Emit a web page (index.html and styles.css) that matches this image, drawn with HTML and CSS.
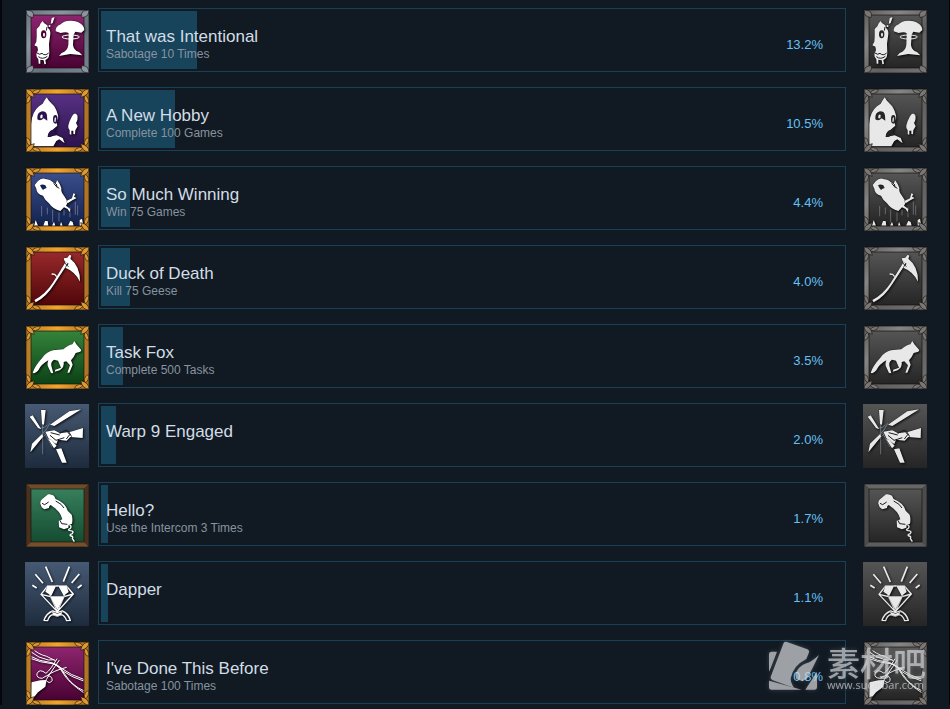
FILE: index.html
```html
<!DOCTYPE html>
<html lang="en">
<head>
<meta charset="utf-8">
<title>Global Achievements</title>
<link rel="stylesheet" href="styles.css">
</head>
<body>
<svg class="sprite" aria-hidden="true">
  <defs>
    <linearGradient id="goldFill" x1="0" y1="0" x2="1" y2="0"><stop offset="0" stop-color="#b57a26"/><stop offset=".5" stop-color="#f3a52c"/><stop offset="1" stop-color="#ab7024"/></linearGradient>
    <linearGradient id="silverFill" x1="0" y1="0" x2="1" y2="1"><stop offset="0" stop-color="#69737f"/><stop offset=".3" stop-color="#8b95a2"/><stop offset=".6" stop-color="#65707c"/><stop offset="1" stop-color="#79838f"/></linearGradient>
    <linearGradient id="grayFill" x1="0" y1="0" x2="1" y2="1"><stop offset="0" stop-color="#5b5b5b"/><stop offset=".3" stop-color="#858585"/><stop offset=".6" stop-color="#606060"/><stop offset="1" stop-color="#727272"/></linearGradient>

    <g id="leaf">
      <path d="M36 30Q42 18 62 19Q58 31 46 32Z M30 36Q18 42 19 62Q31 58 32 46Z"/>
      <path d="M18 18Q38 18 43 43Q18 38 18 18Z"/>
    </g>
    <symbol id="frame-leaf" viewBox="15 15 192 192">
      <path class="frame" fill-rule="evenodd" d="M18 18H207V207H18Z M42 33Q33 33 33 42V183Q33 192 42 192H183Q192 192 192 183V42Q192 33 183 33Z"/>
      <g class="orn">
        <use href="#leaf"/>
        <use href="#leaf" transform="translate(225 0) scale(-1 1)"/>
        <use href="#leaf" transform="translate(0 225) scale(1 -1)"/>
        <use href="#leaf" transform="translate(225 225) scale(-1 -1)"/>
      </g>
    </symbol>
    <g id="tip"><path d="M18 18L35 21L41 30L39 41L29 38L21 33Z"/></g>
    <symbol id="frame-tip" viewBox="15 15 192 192">
      <path class="frame" fill-rule="evenodd" d="M18 18H207V207H18Z M33 33V192H192V33Z"/>
      <g class="orn">
        <use href="#tip"/>
        <use href="#tip" transform="translate(225 0) scale(-1 1)"/>
        <use href="#tip" transform="translate(0 225) scale(1 -1)"/>
        <use href="#tip" transform="translate(225 225) scale(-1 -1)"/>
      </g>
    </symbol>
    <symbol id="frame-bevel" viewBox="15 15 192 192">
      <path class="bevel-a" d="M18 18H207L192 33H33Z"/>
      <path class="bevel-b" d="M18 18L33 33V192L18 207Z M207 18V207L192 192V33Z"/>
      <path class="bevel-c" d="M18 207H207L192 192H33Z"/>
      <path class="edge" d="M18 18H207V207H18Z M33 33V192H192V33Z"/>
    </symbol>

    <symbol id="sabotage" viewBox="15 15 192 192">
      <g class="ink">
        <path d="M50 75L58 67L62 58L68 51L72 57L82 64L84 72Q92 78 91 90L87 120L88 148L86 160Q80 168 76 168L78 180L73 181L71 169L61 167L61 179L56 179L55 166Q48 158 49 150L54 138L52 128L43 124L49 113L50 98Z"/>
        <path d="M95 42L104 39L98 57L92 60Z M86 64L91 63L91 69L86 69Z"/>
        <path d="M107 82Q105 68 122 61Q130 51 150 50Q170 49 180 58Q192 64 193 78L184 86L166 83L161 92L159 122Q160 138 177 144L187 154L151 150L117 156L125 147Q143 140 145 122L146 88Q140 82 122 87Z"/>
      </g>
      <ellipse class="line" cx="152" cy="99" rx="26" ry="6" stroke-width="3"/>
      <ellipse class="hole" cx="71" cy="91" rx="8" ry="12"/><ellipse class="ink-flat" cx="72" cy="92" rx="3" ry="6"/>
      <path class="dark-line" d="M51 147Q59 154 66 148Q75 157 86 147 M55 158Q68 168 82 157 M81 69L79 80"/>
    </symbol>

    <symbol id="hobby" viewBox="15 15 192 192">
      <g class="ink">
        <path d="M33 188V124Q36 86 57 70L68 62L73 53L80 43L87 53L97 64Q108 74 113 94Q118 108 109 116L112 128L97 141Q85 144 83 162Q92 163 98 159L110 157L128 165L134 181L118 169L109 174L100 190H42Q34 190 33 188Z"/>
        <path d="M156 100Q164 85 172 97Q175 110 168 120L173 130L166 142L165 154L160 153L160 143L154 143L154 155L149 154L149 142Q143 137 145 127Q149 112 156 100Z"/>
      </g>
      <path class="hole" d="M52 109Q50 88 66 85Q80 85 81 98L82 113L71 106Q62 116 52 109Z"/>
      <ellipse class="hole" cx="106" cy="109" rx="7" ry="13"/>
      <path class="ink-flat" d="M61 98Q65 92 68 96L67 106L61 106Z M104 105L108 103L107 116L103 116Z"/>
      <path class="hole" d="M111 132L98 141Q85 145 83 160Q91 163 99 157L110 154Q99 148 111 132Z"/>
    </symbol>

    <symbol id="winning" viewBox="15 15 192 192">
      <path class="streak" d="M65 132V163 M82 137V157 M98 143V181 M117 151V178 M132 143V160 M150 136V166 M166 119V158 M173 130V160"/>
      <g class="ink">
        <path d="M44 69L54 57Q65 45 79 52Q89 51 99 61L107 67L111 54L119 66L124 78Q122 90 132 101Q141 112 142 124L138 131L151 141L149 151L143 141L132 136L121 147Q99 142 87 124L76 113L69 101Q50 97 49 80Z"/>
        <path d="M139 117L156 109L160 94L166 96L162 104L170 108L157 115L143 124Z"/>
        <path d="M42 191L47 174L54 191Z M70 191L75 177L83 177L85 191Z M96 191L102 179L106 191Z M120 191L123 179L128 191Z M144 191L151 176L158 180L161 191Z M179 191V174L186 170L190 191Z"/>
      </g>
      <path class="hole" d="M60 70Q67 65 76 70L80 78Q73 80 69 84Q64 79 60 70Z"/>
      <path class="dark-line" d="M101 64Q109 76 118 79 M109 66L111 76"/>
    </symbol>

    <symbol id="scythe" viewBox="15 15 192 192">
      <g class="ink">
        <path d="M43 177Q75 161 98 126L131 73L141 54L147 58L136 79L103 129Q78 169 47 184Z"/>
        <path d="M131 52L142 50L149 41L154 44L151 53Q181 76 180 122Q166 92 136 80L146 68L134 61Z"/>
      </g>
      <path class="line" stroke-width="4" d="M95 99L104 100L110 107"/>
      <path class="dark-line" d="M133 65L145 77"/>
    </symbol>

    <symbol id="fox" viewBox="15 15 192 192">
      <path class="ink" d="M38 158Q45 137 67 113Q81 95 99 91L130 88Q146 74 157 73L163 63L169 73L184 90L181 95L167 99Q162 112 153 121L158 134L148 158L142 158L150 136L139 124L131 126Q134 141 119 151L104 155L106 149L123 143L114 122L102 119Q92 125 94 137L100 160L93 159L85 142Q80 133 85 121Q63 133 55 151Q45 163 38 158Z"/>
    </symbol>

    <symbol id="warp" viewBox="15 15 192 192">
      <path class="crack" d="M68 66V166 M82 78Q74 88 58 88 M78 92L60 114 M74 102L96 144 M90 72L77 94 M57 126L76 107"/>
      <g class="ink">
        <path d="M29 53L38 49L64 91L54 87Z M63 33L77 33L72 77L66 76Z M184 31L148 37L90 77L103 81Z M31 160L36 134L67 104L69 113Z"/>
        <path d="M76 98L103 94L120 103L152 98L189 87L188 117L151 114L140 125L114 122L109 135L95 127L86 119Z"/>
        <path d="M84 119L94 123L110 140L102 148Z M108 151L124 148L140 191L126 191Z"/>
      </g>
      <path class="dark-line" d="M119 103L139 93L149 107L139 120 M90 109L108 124L133 116 M92 101L119 108 M146 98L155 113"/>
    </symbol>

    <symbol id="phone" viewBox="15 15 192 192">
      <path class="line" stroke-width="4" d="M143 137Q158 143 151 151Q140 156 151 158Q163 159 157 167Q146 171 153 174Q161 175 157 181L163 191"/>
      <path class="ink" d="M61 77Q60 67 67 63L84 49Q94 47 102 53L107 63Q137 75 143 98L155 110Q159 122 156 137L146 140L145 149L132 154L117 148L116 128L127 124Q122 100 92 81L88 84L87 90L73 94L65 88Z"/>
      <path class="dark-line" d="M107 69Q126 78 132 90 M66 76L74 80L86 72 M120 127L125 137L142 139"/>
    </symbol>

    <symbol id="diamond" viewBox="15 15 192 192">
      <path class="line" stroke-width="4" d="M83 87H139L160 111L112 164L63 112Z M63 112L92 119L112 163L132 119L160 111 M83 87L92 119H132L139 87 M72 190Q79 169 98 162L112 167L127 162Q144 168 151 190L140 191Q134 175 124 173L112 177L97 173Q87 177 83 191Z"/>
      <path class="ink" d="M82 87H108L94 116L76 104Z M115 87H140L146 105L131 116Z M91 119H133L112 158Z M96 164L112 170L128 164L123 173L112 177L99 173Z"/>
      <path class="line" stroke-width="5" d="M77 29L97 75 M148 29L130 74 M46 52L69 79 M178 51L155 78 M37 85L50 93 M185 84L173 93"/>
    </symbol>

    <symbol id="wires" viewBox="15 15 192 192">
      <path class="line" stroke-width="3" d="M34 35Q54 55 80 61L106 74 M34 48Q54 66 85 72L103 71 M34 62Q56 75 90 79Q111 83 128 99Q151 117 191 130 M34 68Q59 79 96 83Q117 88 130 106Q158 125 191 135 M111 68Q92 101 78 112Q58 96 51 113Q48 126 67 127L78 120 M82 119Q99 121 96 134Q88 146 78 132L90 113L118 72 M78 121Q100 104 140 94 M94 80Q115 86 127 108Q144 139 191 170 M104 85Q124 96 134 114Q156 149 191 164"/>
      <path class="ink" d="M34 139L61 133L80 132L76 152L54 169L37 190Q33 190 33 184Z"/>
    </symbol>
  </defs>
</svg>

<main class="achievements">
  <article class="row">
    <svg class="badge silver magenta framed" role="img" aria-label="Unlocked"><use href="#frame-tip"/><use class="glyph" href="#sabotage"/></svg>
    <div class="bar"><div class="fill" style="width:13%"></div><div class="info"><div><h3>That was Intentional</h3><p>Sabotage 10 Times</p></div><span class="percent">13.2%</span></div></div>
    <svg class="badge locked framed" role="img" aria-label="Locked"><use href="#frame-tip"/><use class="glyph" href="#sabotage"/></svg>
  </article>
  <article class="row">
    <svg class="badge gold purple framed" role="img" aria-label="Unlocked"><use class="glyph" href="#hobby"/><use href="#frame-leaf"/></svg>
    <div class="bar"><div class="fill" style="width:10%"></div><div class="info"><div><h3>A New Hobby</h3><p>Complete 100 Games</p></div><span class="percent">10.5%</span></div></div>
    <svg class="badge locked framed" role="img" aria-label="Locked"><use class="glyph" href="#hobby"/><use href="#frame-leaf"/></svg>
  </article>
  <article class="row">
    <svg class="badge gold blue framed" role="img" aria-label="Unlocked"><use class="glyph" href="#winning"/><use href="#frame-leaf"/></svg>
    <div class="bar"><div class="fill" style="width:4%"></div><div class="info"><div><h3>So Much Winning</h3><p>Win 75 Games</p></div><span class="percent">4.4%</span></div></div>
    <svg class="badge locked framed" role="img" aria-label="Locked"><use class="glyph" href="#winning"/><use href="#frame-leaf"/></svg>
  </article>
  <article class="row">
    <svg class="badge gold red framed" role="img" aria-label="Unlocked"><use class="glyph" href="#scythe"/><use href="#frame-leaf"/></svg>
    <div class="bar"><div class="fill" style="width:4%"></div><div class="info"><div><h3>Duck of Death</h3><p>Kill 75 Geese</p></div><span class="percent">4.0%</span></div></div>
    <svg class="badge locked framed" role="img" aria-label="Locked"><use class="glyph" href="#scythe"/><use href="#frame-leaf"/></svg>
  </article>
  <article class="row">
    <svg class="badge gold green framed" role="img" aria-label="Unlocked"><use class="glyph" href="#fox"/><use href="#frame-leaf"/></svg>
    <div class="bar"><div class="fill" style="width:3%"></div><div class="info"><div><h3>Task Fox</h3><p>Complete 500 Tasks</p></div><span class="percent">3.5%</span></div></div>
    <svg class="badge locked framed" role="img" aria-label="Locked"><use class="glyph" href="#fox"/><use href="#frame-leaf"/></svg>
  </article>
  <article class="row">
    <svg class="badge slate" role="img" aria-label="Unlocked"><use class="glyph" href="#warp"/></svg>
    <div class="bar"><div class="fill" style="width:2%"></div><div class="info"><div><h3>Warp 9 Engaged</h3></div><span class="percent">2.0%</span></div></div>
    <svg class="badge locked" role="img" aria-label="Locked"><use class="glyph" href="#warp"/></svg>
  </article>
  <article class="row">
    <svg class="badge bronze jade framed" role="img" aria-label="Unlocked"><use href="#frame-bevel"/><use class="glyph" href="#phone"/></svg>
    <div class="bar"><div class="fill" style="width:1%"></div><div class="info"><div><h3>Hello?</h3><p>Use the Intercom 3 Times</p></div><span class="percent">1.7%</span></div></div>
    <svg class="badge locked framed" role="img" aria-label="Locked"><use href="#frame-bevel"/><use class="glyph" href="#phone"/></svg>
  </article>
  <article class="row">
    <svg class="badge slate" role="img" aria-label="Unlocked"><use class="glyph" href="#diamond"/></svg>
    <div class="bar"><div class="fill" style="width:1%"></div><div class="info"><div><h3>Dapper</h3></div><span class="percent">1.1%</span></div></div>
    <svg class="badge locked" role="img" aria-label="Locked"><use class="glyph" href="#diamond"/></svg>
  </article>
  <article class="row">
    <svg class="badge gold magenta framed" role="img" aria-label="Unlocked"><use class="glyph" href="#wires"/><use href="#frame-leaf"/></svg>
    <div class="bar"><div class="fill" style="width:0%"></div><div class="info"><div><h3>I've Done This Before</h3><p>Sabotage 100 Times</p></div><span class="percent">0.8%</span></div></div>
    <svg class="badge locked framed" role="img" aria-label="Locked"><use class="glyph" href="#wires"/><use href="#frame-leaf"/></svg>
    <div class="watermark">
      <svg class="mark" viewBox="0 0 150 150" aria-hidden="true">
        <path d="M0 40Q0 32 8 32H24L4 84L0 92Z M0 119L98 146H8Q0 146 0 138Z M144 92V138Q144 146 136 146H109Z"/>
        <path d="M44 6Q47 0 54 3L115 25Q123 29 119 37L112 54Q72 74 65 112Q65 128 76 141L12 118Q2 113 6 105Z"/>
        <path d="M150 42Q126 64 112 67Q87 76 79 101L82 115L101 120L114 113L131 80Z"/>
      </svg>
      <div><div class="brand" lang="zh">素材吧</div><div class="url">www.sucaibar.com</div></div>
    </div>
  </article>
</main>
</body>
</html>
```

FILE: styles.css
```css
* { box-sizing: border-box; }

body {
  margin: 0;
  background: #111a22;
  border-left: 2px solid #03070d;
  border-right: 1px solid #03070d;
  font-family: "Liberation Sans", Arial, sans-serif;
}

.sprite { position: absolute; width: 0; height: 0; }

.achievements {
  display: flex;
  flex-direction: column;
  gap: 14px;
  padding: 8px 22px 0 23px;
}

.row {
  position: relative;
  display: flex;
  align-items: flex-end;
}

.bar {
  flex: 1;
  display: grid;
  height: 64px;
  margin: 0 17px 1px 9px;
  padding: 2px 8px 2px 2px;
  border: 1px solid #184158;
}

.fill, .info { grid-area: 1 / 1; }
.fill { background: #17435b; }

.info {
  display: flex;
  justify-content: space-between;
  align-items: flex-start;
  padding: 16px 14px 0 5px;
}

h3, p { margin: 0; font-weight: 400; }
h3 { font-size: 17px; line-height: 20px; color: #d2dde6; }
p { font-size: 12px; line-height: 14px; color: #8793a0; }

.percent {
  margin-top: 8px;
  font-size: 13px;
  line-height: 20px;
  color: #67c1f5;
}

/* Badges */
.badge {
  --ink: #fff;
  --frame: url(#grayFill);
  --orn: #777;
  --bevel-a: #666;
  --bevel-b: #4c4c4c;
  --bevel-c: #5c5c5c;
  flex: none;
  display: block;
  width: 64px;
  height: 64px;
  margin-top: 1px;
  background: linear-gradient(var(--hi), var(--lo)) no-repeat;
}
.framed { background-position: 6px 6px; background-size: 53px 53px; }

.gold { --frame: url(#goldFill); --orn: #de9a30; }
.silver { --frame: url(#silverFill); --orn: #8995a3; }
.bronze { --bevel-a: #6d4b2b; --bevel-b: #4a311d; --bevel-c: #77502b; }
.magenta { --hi: #8e2570; --lo: #490232; }
.purple { --hi: #573184; --lo: #2c124d; }
.blue { --hi: #3b4d8b; --lo: #13234f; }
.red { --hi: #98292b; --lo: #500609; }
.green { --hi: #34833b; --lo: #0c4216; }
.jade { --hi: #377f5c; --lo: #154c31; }
.slate { --hi: #475a73; --lo: #1e2b3d; }
.locked { --ink: #e8e8e8; --hi: #555; --lo: #252525; }

.frame { fill: var(--frame); stroke: #14110d; stroke-width: 2; }
.orn { fill: var(--orn); stroke: #21170d; stroke-width: 2; stroke-linejoin: round; }
.edge { fill: none; stroke: #15120f; stroke-width: 2; }
.bevel-a { fill: var(--bevel-a); }
.bevel-b { fill: var(--bevel-b); }
.bevel-c { fill: var(--bevel-c); }

.glyph { filter: drop-shadow(1px 1px 1px rgba(0, 0, 0, .75)); }
.ink, .ink-flat { fill: var(--ink); }
.ink { stroke: rgba(0, 0, 0, .55); stroke-width: 2; paint-order: stroke; }
.hole { fill: var(--lo); }
.line { fill: none; stroke: var(--ink); stroke-linejoin: round; }
.dark-line { fill: none; stroke: #1a1a20; stroke-width: 3; }
.streak { stroke: var(--ink); stroke-width: 3; opacity: .3; }
.crack { fill: none; stroke: #a9bccd; stroke-width: 3; opacity: .45; }

/* Site mark laid over the last row */
.watermark {
  position: absolute;
  right: 1px;
  bottom: 14px;
  display: flex;
  align-items: flex-end;
  gap: 8px;
  color: #d9dade;
  opacity: .7;
  pointer-events: none;
  filter: drop-shadow(0 0 2px rgba(200, 205, 215, .35));
}
.mark { width: 50px; height: 50px; fill: currentColor; }
.brand {
  font-family: "Noto Sans CJK SC", sans-serif;
  font-size: 33px;
  font-weight: 500;
  line-height: 34px;
}
.url {
  font-family: "Open Sans", sans-serif;
  font-size: 11px;
  line-height: 12px;
}
```
